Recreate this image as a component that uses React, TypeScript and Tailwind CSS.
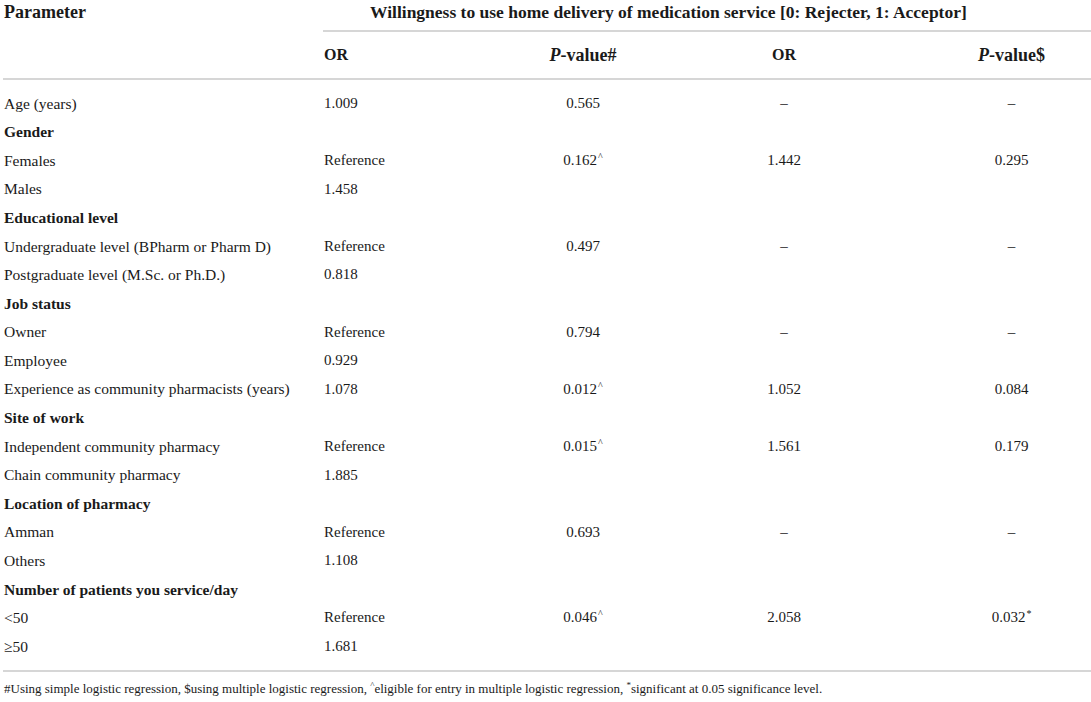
import React from "react";

type Row = {
  label: string;
  group?: boolean;
  or?: string;
  p1?: React.ReactNode;
  or2?: string;
  p2?: React.ReactNode;
};

const Caret = () => <sup className="ml-[1px] text-[10px]">^</sup>;
const Star = () => <sup className="ml-[1px] text-[10px]">*</sup>;

const rows: Row[] = [
  { label: "Age (years)", or: "1.009", p1: "0.565", or2: "–", p2: "–" },
  { label: "Gender", group: true },
  { label: "Females", or: "Reference", p1: <>0.162<Caret /></>, or2: "1.442", p2: "0.295" },
  { label: "Males", or: "1.458" },
  { label: "Educational level", group: true },
  { label: "Undergraduate level (BPharm or Pharm D)", or: "Reference", p1: "0.497", or2: "–", p2: "–" },
  { label: "Postgraduate level (M.Sc. or Ph.D.)", or: "0.818" },
  { label: "Job status", group: true },
  { label: "Owner", or: "Reference", p1: "0.794", or2: "–", p2: "–" },
  { label: "Employee", or: "0.929" },
  { label: "Experience as community pharmacists (years)", or: "1.078", p1: <>0.012<Caret /></>, or2: "1.052", p2: "0.084" },
  { label: "Site of work", group: true },
  { label: "Independent community pharmacy", or: "Reference", p1: <>0.015<Caret /></>, or2: "1.561", p2: "0.179" },
  { label: "Chain community pharmacy", or: "1.885" },
  { label: "Location of pharmacy", group: true },
  { label: "Amman", or: "Reference", p1: "0.693", or2: "–", p2: "–" },
  { label: "Others", or: "1.108" },
  { label: "Number of patients you service/day", group: true },
  { label: "<50", or: "Reference", p1: <>0.046<Caret /></>, or2: "2.058", p2: <>0.032<Star /></> },
  { label: "≥50", or: "1.681" },
];

export default function App() {
  return (
    <div className="h-[702px] w-[1091px] overflow-hidden bg-white font-['Liberation_Serif',serif] text-[#1a1a1a]">
      <div className="flex">
        <div className="w-[316px] pl-[4px] pt-[1px] text-[18px] font-bold leading-[22px]">Parameter</div>
        <div className="flex-1">
          <div className="flex h-[30px] items-start pl-[54px] pt-[1px] text-[17.5px] font-bold leading-[22px]">
            Willingness to use home delivery of medication service [0: Rejecter, 1: Acceptor]
          </div>
          <div className="ml-[7px] h-[2px] bg-[#d6d6d6]" />
          <div className="grid h-[46px] grid-cols-[154px_226px_176px_219px] items-center font-bold">
            <div className="pl-2 text-[16px]">OR</div>
            <div className="text-center text-[18px]">
              <i>P</i>-value#
            </div>
            <div className="text-center text-[16px]">OR</div>
            <div className="pl-[60px] text-center text-[18px]">
              <i>P</i>-value$
            </div>
          </div>
        </div>
      </div>
      <div className="ml-[3px] h-[2px] bg-[#d6d6d6]" />
      <div className="py-[9px]">
        {rows.map((r) => (
          <div
            key={r.label}
            className="grid h-[28.6px] grid-cols-[316px_154px_226px_176px_219px] items-center text-[15px] leading-none"
          >
            <div className={r.group ? "pl-[4px] text-[15.5px] font-bold" : "pl-[4px] text-[15.5px]"}>{r.label}</div>
            <div className="pl-2">{r.or}</div>
            <div className="text-center">{r.p1}</div>
            <div className="text-center">{r.or2}</div>
            <div className="pl-[60px] text-center">{r.p2}</div>
          </div>
        ))}
      </div>
      <div className="ml-[3px] h-[2px] bg-[#d6d6d6]" />
      <div className="pl-[4px] pt-[9px] text-[13px] leading-[15px]">
        #Using simple logistic regression, $using multiple logistic regression, <sup className="text-[9px]">^</sup>
        eligible for entry in multiple logistic regression, <sup className="text-[9px]">*</sup>significant at 0.05
        significance level.
      </div>
    </div>
  );
}
